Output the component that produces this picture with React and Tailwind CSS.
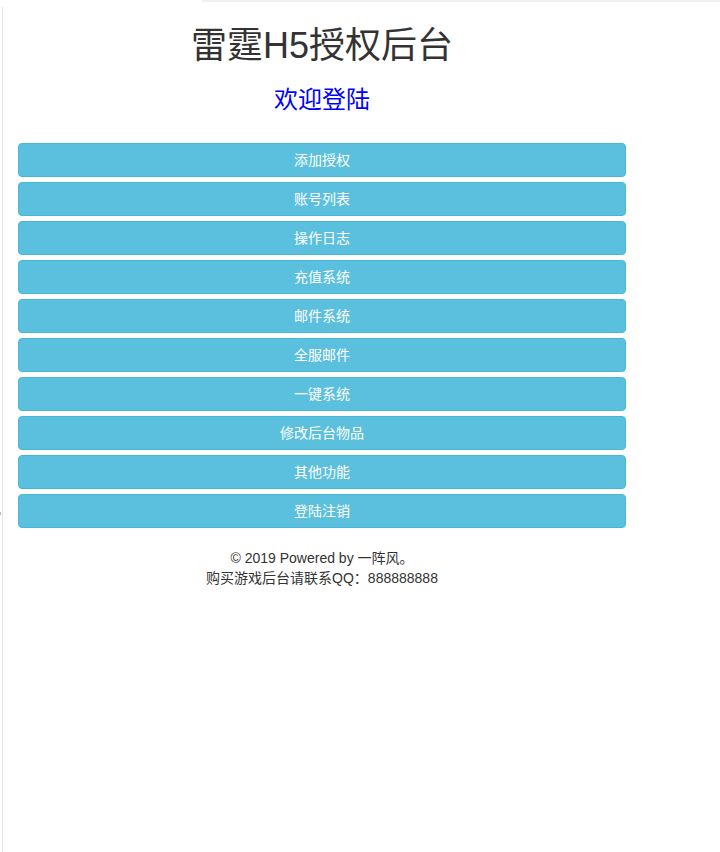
import React from "react";

const menuItems = [
  "添加授权",
  "账号列表",
  "操作日志",
  "充值系统",
  "邮件系统",
  "全服邮件",
  "一键系统",
  "修改后台物品",
  "其他功能",
  "登陆注销",
];

const font = {
  fontFamily: '"Liberation Sans", Arial, "Noto Sans CJK SC", sans-serif',
};

export default function App() {
  return (
    <div className="relative min-h-[852px] bg-white text-[#333]" style={font}>
      {/* top strip */}
      <div className="ml-[202px] h-[2px] bg-[#f0f0f0]" />

      {/* tiny mark on the left edge */}
      <div className="absolute left-0 top-[512px] h-[3px] w-px bg-[#bbb]" />

      <div className="ml-[2px] mt-[5px] min-h-[845px] border-l border-[#e6e6e6]">
        <div className="w-[638px] px-[15px] pt-[19px]">
          <h1 className="text-center text-[36px] font-normal leading-[1.1] text-[#333]">
            雷霆H5授权后台
          </h1>
          <h3 className="mt-[21px] text-center text-[24px] font-normal leading-[1.1] text-[#0000ff]">
            欢迎登陆
          </h3>

          <div className="mt-[30px] flex flex-col gap-[5px]">
            {menuItems.map((item) => (
              <button
                key={item}
                className="h-[34px] w-full rounded-[4px] border border-[#46b8da] bg-[#5bc0de] text-[14px] leading-[20px] text-white"
              >
                {item}
              </button>
            ))}
          </div>

          <div className="mt-[20px] text-center text-[14px] leading-[20px] text-[#333]">
            <p>© 2019 Powered by 一阵风。</p>
            <p>购买游戏后台请联系QQ：888888888</p>
          </div>
        </div>
      </div>
    </div>
  );
}
